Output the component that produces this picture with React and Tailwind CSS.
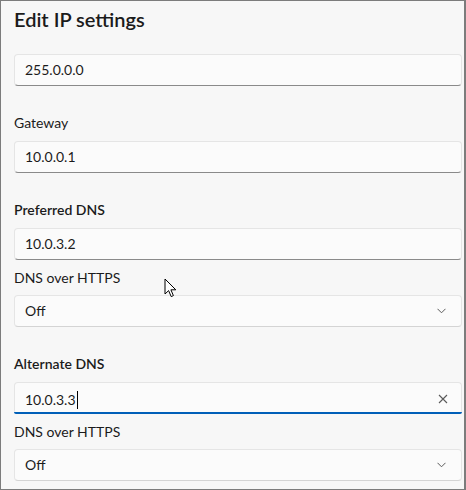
import React from 'react';

const font = { fontFamily: '"Segoe UI", Lato, "Liberation Sans", Arial, sans-serif' };

const Field = ({ value, focused }) => (
  <div
    className={`relative flex h-[32px] items-center rounded-[4px] border border-[#e5e5e5] bg-[#fbfbfb] pl-[10px] pr-[12px] text-[14px] text-[#1b1b1b] ${
      focused ? 'border-b-0' : 'border-b-[#8a8a8a]'
    }`}
  >
    <span className="flex-1 leading-[20px]">
      {value}
      {focused && <span className="ml-[1px] inline-block h-[18px] w-[1px] translate-y-[4px] bg-black align-baseline" />}
    </span>
    {focused && (
      <svg width="10" height="10" viewBox="0 0 10 10" className="mr-[1px]">
        <path d="M1 1 L9 9 M9 1 L1 9" stroke="#5a5a5a" strokeWidth="1.1" />
      </svg>
    )}
    {focused && <div className="absolute bottom-0 left-[-1px] right-[-1px] h-[2px] rounded-b-[4px] bg-[#005fb8]" />}
  </div>
);

const Select = ({ value }) => (
  <div className="flex h-[32px] items-center rounded-[4px] border border-[#e5e5e5] border-b-[#d4d4d4] bg-[#fbfbfb] pl-[10px] pr-[15px] text-[14px] text-[#1b1b1b]">
    <span className="flex-1 leading-[20px]">{value}</span>
    <svg width="9" height="6" viewBox="0 0 9 6">
      <path d="M0.5 0.8 L4.5 4.8 L8.5 0.8" fill="none" stroke="#5a5a5a" strokeWidth="1" />
    </svg>
  </div>
);

const Label = ({ children, bold, className = '' }) => (
  <div className={`h-[20px] text-[14px] leading-[20px] text-[#1b1b1b] ${bold ? 'font-semibold' : ''} ${className}`}>
    {children}
  </div>
);

export default function App() {
  return (
    <div style={font} className="relative h-[490px] w-[466px] overflow-hidden border border-r-2 border-[#7c7c7c] bg-[#f7f7f7]">
      <div className="flex flex-col pl-[13px] pr-[2px]">
        <h1 className="mt-[4px] h-[28px] text-[20px] font-semibold leading-[28px] text-[#1b1b1b]">Edit IP settings</h1>
        <div className="mt-[21px]">
          <Field value="255.0.0.0" />
        </div>

        <Label className="mt-[27px] mb-[8px]">Gateway</Label>
        <Field value="10.0.0.1" />

        <Label bold className="mt-[27px] mb-[8px]">Preferred DNS</Label>
        <Field value="10.0.3.2" />
        <Label className="mt-[8px] mb-[7px]">DNS over HTTPS</Label>
        <Select value="Off" />

        <Label bold className="mt-[27px] mb-[8px]">Alternate DNS</Label>
        <Field value="10.0.3.3" focused />
        <Label className="mt-[8px] mb-[7px]">DNS over HTTPS</Label>
        <Select value="Off" />
      </div>

      <svg className="absolute left-[163px] top-[277px]" width="14" height="21" viewBox="0 0 14 21">
        <path
          d="M1 1 L1 16 L4.6 12.6 L7.2 18.6 L9.4 17.6 L6.9 11.8 L11.8 11.8 Z"
          fill="#ffffff"
          stroke="#000000"
          strokeWidth="1"
          strokeLinejoin="round"
        />
      </svg>
    </div>
  );
}
